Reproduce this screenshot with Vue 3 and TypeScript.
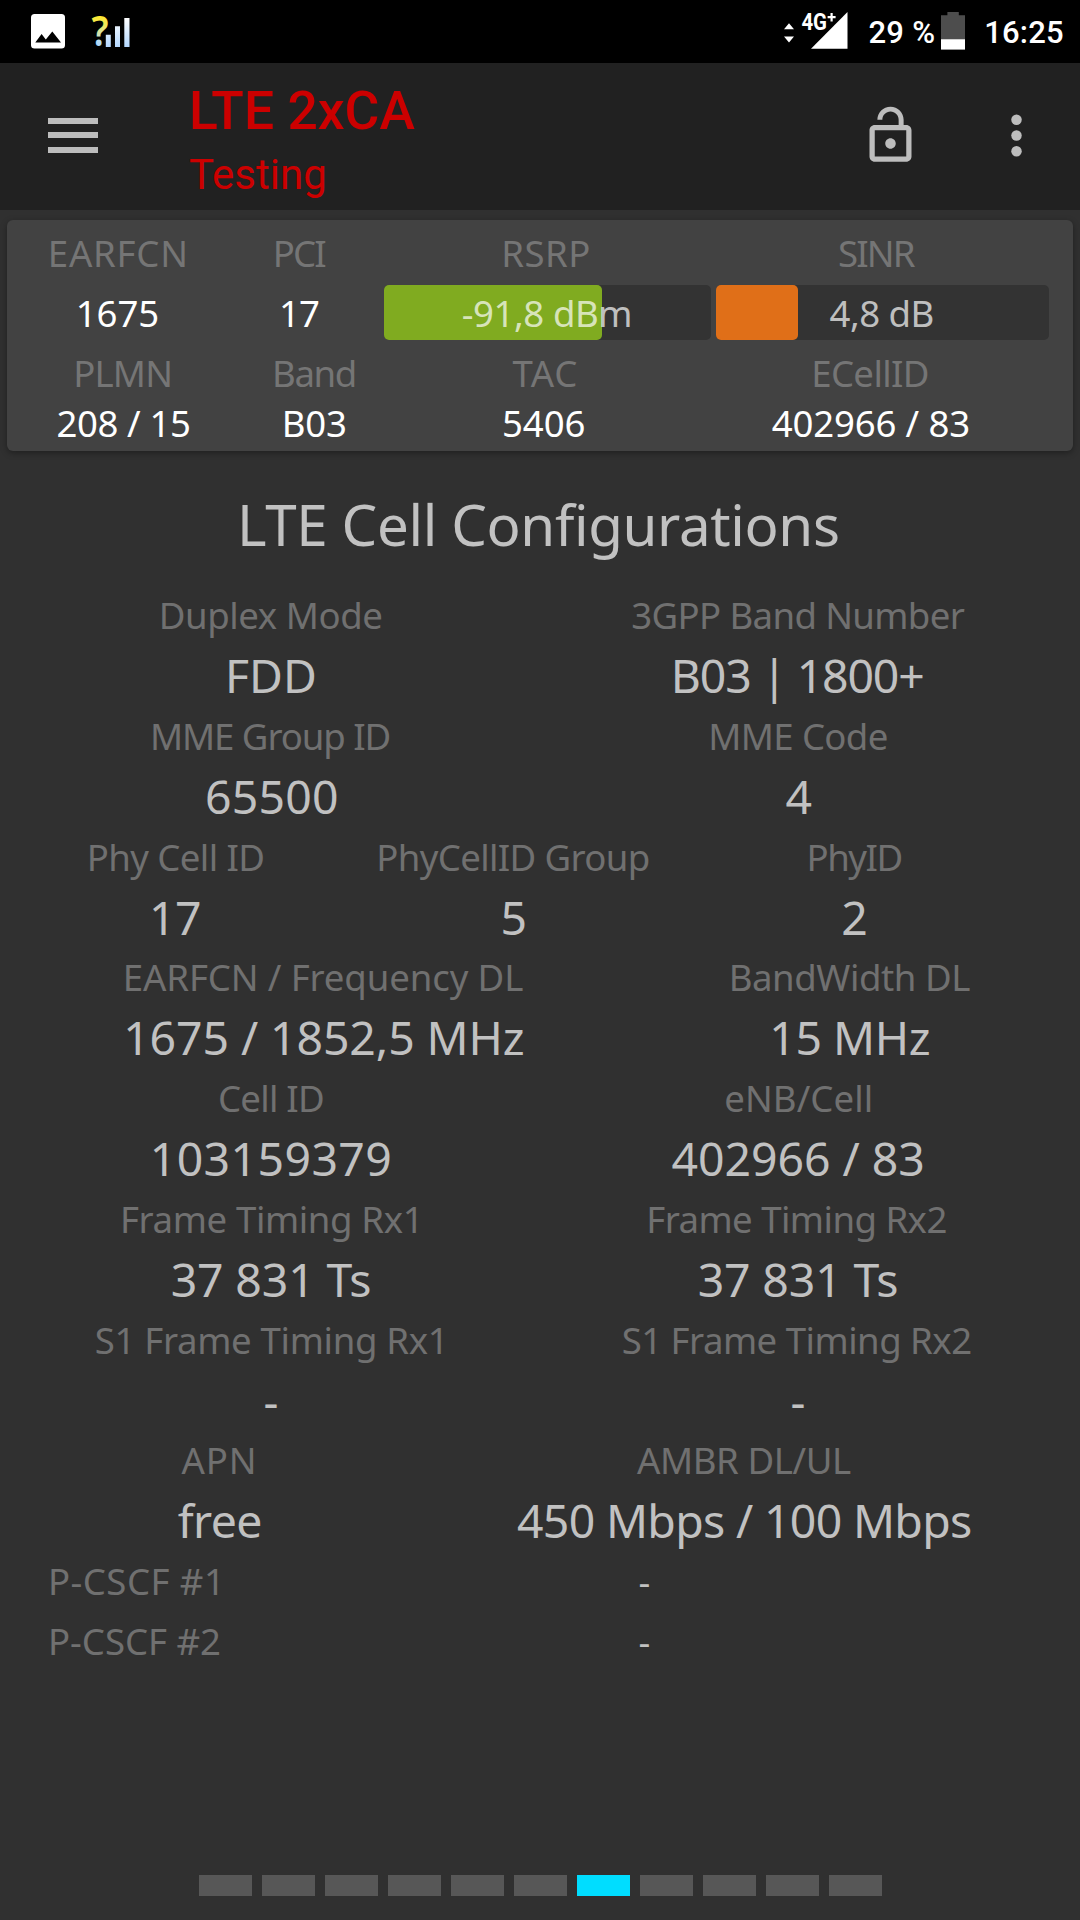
<script setup lang="ts">
interface Cell {
  text: string
  width: number
  shift: number
}
interface Group {
  layout: string
  labels: Cell[]
  values: Cell[]
}

const c = (text: string, width: number, shift = 0): Cell => ({ text, width, shift })

const canvas = document.createElement('canvas').getContext('2d')!

// Tracks a text so that its visible glyphs span the given width, and trims its side bearings.
const vFit = {
  mounted(el: HTMLElement, binding: { value: number | Cell }) {
    const fit = typeof binding.value === 'number' ? c('', binding.value) : binding.value
    const text = el.textContent ?? ''
    const style = getComputedStyle(el)
    canvas.font = `${style.fontWeight} ${style.fontSize} ${style.fontFamily}`
    const m = canvas.measureText(text)
    const ink = m.actualBoundingBoxLeft + m.actualBoundingBoxRight
    const spacing = text.length > 1 ? (fit.width - ink) / (text.length - 1) : 0
    el.style.letterSpacing = `${spacing}px`
    el.style.marginLeft = `${m.actualBoundingBoxLeft + fit.shift}px`
    el.style.marginRight = `${m.actualBoundingBoxRight - m.width - spacing - fit.shift}px`
  },
}

const summaryTop = [c('EARFCN', 134.3), c('PCI', 49.3), c('RSRP', 85), c('SINR', 76.8)]
const summaryLabels = [c('PLMN', 94), c('Band', 79.6), c('TAC', 63.8), c('ECellID', 113.6)]
const summaryValues = [c('208 / 15', 131.5), c('B03', 60.2), c('5406', 80.6), c('402966 / 83', 196.3, -1)]

const groups: Group[] = [
  {
    layout: 'half',
    labels: [c('Duplex Mode', 219.4, -0.5), c('3GPP Band Number', 332.3)],
    values: [c('FDD', 86), c('B03 | 1800+', 248.3, 0.5)],
  },
  {
    layout: 'half',
    labels: [c('MME Group ID', 236.6, -0.8), c('MME Code', 175.3, 0.5)],
    values: [c('65500', 130.1), c('4', 23)],
  },
  {
    layout: 'third',
    labels: [c('Phy Cell ID', 173.5), c('PhyCellID Group', 269.3), c('PhyID', 91.9)],
    values: [c('17', 47), c('5', 21.3, -0.6), c('2', 21, -0.8)],
  },
  {
    layout: 'frequency',
    labels: [c('EARFCN / Frequency DL', 397.3), c('BandWidth DL', 238.6)],
    values: [c('1675 / 1852,5 MHz', 395.7, 0.5), c('15 MHz', 155.3)],
  },
  {
    layout: 'half',
    labels: [c('Cell ID', 103, -0.5), c('eNB/Cell', 144.3)],
    values: [c('103159379', 236.6), c('402966 / 83', 250.7, -1.6)],
  },
  {
    layout: 'half',
    labels: [c('Frame Timing Rx1', 292.7, -2.7), c('Frame Timing Rx2', 297.2, -0.7)],
    values: [c('37 831 Ts', 197.7, -0.5), c('37 831 Ts', 197.7)],
  },
  {
    layout: 'half',
    labels: [c('S1 Frame Timing Rx1', 345, -3.7), c('S1 Frame Timing Rx2', 348.5, -1.6)],
    values: [c('-', 12, -1), c('-', 12, -0.5)],
  },
  {
    layout: 'apn',
    labels: [c('APN', 72.3, -0.9), c('AMBR DL/UL', 213.9)],
    values: [c('free', 82.6, 0.5), c('450 Mbps / 100 Mbps', 454.2)],
  },
]

const servers = [c('P-CSCF #1', 165.9), c('P-CSCF #2', 169)]
const pageCount = 11
const activePage = 7
</script>

<template>
  <div class="screen">
    <header class="status">
      <svg class="picture" width="34" height="35" viewBox="0 0 34 35">
        <rect width="34" height="34.5" rx="3.5" fill="#fff" />
        <path d="M4.3 28.4 10.6 20l4.2 5.6L21.3 17.6 30 28.4z" fill="#000" />
      </svg>
      <svg class="unknown" width="40" height="63" viewBox="0 -13 40 63">
        <defs>
          <linearGradient id="ask" gradientUnits="userSpaceOnUse" x1="0" y1="2" x2="0" y2="34">
            <stop offset="0" stop-color="#ffe82a" />
            <stop offset="0.35" stop-color="#f0e860" />
            <stop offset="0.8" stop-color="#b8dcf4" />
            <stop offset="1" stop-color="#a8d4ff" />
          </linearGradient>
          <linearGradient id="bar" gradientUnits="userSpaceOnUse" x1="0" y1="5" x2="0" y2="34">
            <stop offset="0" stop-color="#fff" />
            <stop offset="1" stop-color="#b4d8ff" />
          </linearGradient>
        </defs>
        <text class="ask" x="0.4" y="33.4" textLength="17" lengthAdjust="spacingAndGlyphs" fill="url(#ask)">?</text>
        <path d="M14.8 21.7h5V34h-5zM24 13.3h5V34h-5zM33.3 5h5.2v29h-5.2z" fill="url(#bar)" />
      </svg>
      <span class="grow"></span>
      <svg class="network" width="64" height="63" viewBox="0 -12 64 63">
        <path d="M0 17.2 5 11.3l5 5.9zM0 24.6h10l-5 5.8z" fill="#fff" />
        <path d="M27 36.8 63.5 0v36.8z" fill="#fff" />
        <text class="net-type" x="17.4" y="18" textLength="25.6" lengthAdjust="spacingAndGlyphs">4G</text>
        <path d="M43.6 5.2h8M47.6 1v8.4" stroke="#fff" stroke-width="2.2" />
      </svg>
      <span class="percent"><span v-fit="64.7">29 %</span></span>
      <svg class="battery" width="24" height="38" viewBox="0 0 24 38">
        <path d="M0 3.2h6.4V0h11.4v3.2H24v24H0z" fill="#4d4d4d" />
        <path d="M0 27.2h24v10.4H0z" fill="#fff" />
      </svg>
      <span class="clock"><span v-fit="76.8">16:25</span></span>
    </header>

    <nav class="toolbar">
      <div class="burger"><i></i><i></i><i></i></div>
      <div class="titles">
        <div class="title"><span v-fit="223.5">LTE 2xCA</span></div>
        <div class="subtitle"><span v-fit="134.2">Testing</span></div>
      </div>
      <svg class="lock" width="63" height="63" viewBox="0 0 24 24" fill="#bdbdbd">
        <path d="M12 17c1.1 0 2-.9 2-2s-.9-2-2-2-2 .9-2 2 .9 2 2 2zm6-9h-1V6c0-2.76-2.24-5-5-5S7 3.24 7 6h1.9c0-1.71 1.39-3.1 3.1-3.1 1.71 0 3.1 1.39 3.1 3.1v2H6c-1.1 0-2 .9-2 2v10c0 1.1.9 2 2 2h12c1.1 0 2-.9 2-2V10c0-1.1-.9-2-2-2zm0 12H6V10h12v10z" />
      </svg>
      <svg class="more" width="63" height="63" viewBox="0 0 24 24" fill="#bdbdbd">
        <circle cx="12" cy="6" r="2" />
        <circle cx="12" cy="12" r="2" />
        <circle cx="12" cy="18" r="2" />
      </svg>
    </nav>

    <section class="card">
      <div class="row top label">
        <div v-for="cell in summaryTop" :key="cell.text"><span v-fit="cell">{{ cell.text }}</span></div>
      </div>
      <div class="row meters strong">
        <div><span v-fit="78.5">1675</span></div>
        <div class="pci"><span v-fit="37.2">17</span></div>
        <div class="meter rsrp"><i></i><span v-fit="167.7">-91,8 dBm</span></div>
        <div class="meter sinr"><i></i><span v-fit="103">4,8 dB</span></div>
      </div>
      <div class="row lower label">
        <div v-for="cell in summaryLabels" :key="cell.text"><span v-fit="cell">{{ cell.text }}</span></div>
      </div>
      <div class="row lower strong last">
        <div v-for="cell in summaryValues" :key="cell.text"><span v-fit="cell">{{ cell.text }}</span></div>
      </div>
    </section>

    <main>
      <h1><span v-fit="595.8">LTE Cell Configurations</span></h1>
      <div v-for="(group, i) in groups" :key="i" class="group" :class="group.layout">
        <div v-for="cell in group.labels" :key="cell.text" class="label"><span v-fit="cell">{{ cell.text }}</span></div>
        <div v-for="(cell, j) in group.values" :key="j" class="value"><span v-fit="cell">{{ cell.text }}</span></div>
      </div>
      <div v-for="server in servers" :key="server.text" class="server">
        <div class="label"><span v-fit="server">{{ server.text }}</span></div>
        <div class="dash"><span v-fit="9.3">-</span></div>
      </div>
    </main>

    <footer class="pager">
      <i v-for="n in pageCount" :key="n" :class="{ active: n === activePage }"></i>
    </footer>
  </div>
</template>

<style>
body {
  margin: 0;
  background: #303030;
}
</style>

<style scoped>
.screen {
  display: flex;
  flex-direction: column;
  width: 1080px;
  height: 1920px;
  overflow: hidden;
  background: #303030;
  font-family: 'Noto Sans', 'Open Sans', sans-serif;
  white-space: pre;
}
.screen span {
  display: inline-block;
}
.status {
  display: flex;
  flex: none;
  height: 63px;
  background: #000;
  color: #fff;
  font: 500 31px/63px Roboto, sans-serif;
}
.status .grow {
  flex: 1;
}
.picture {
  margin: 14px 0 0 31px;
}
.unknown {
  margin-left: 26px;
}
.ask {
  font: 600 42px 'Noto Sans', sans-serif;
}
.network {
  margin-right: 21px;
}
.net-type {
  font: 700 24px Roboto, sans-serif;
  fill: #fff;
}
.percent {
  padding-top: 1px;
}
.battery {
  margin: 12px 21px 0 7px;
}
.clock {
  padding-top: 1px;
  margin-right: 17px;
}
.toolbar {
  display: flex;
  flex: none;
  height: 147px;
  background: #212121;
  color: #cc0000;
  font-family: Roboto, sans-serif;
}
.burger {
  display: flex;
  flex-direction: column;
  gap: 8px;
  width: 50px;
  margin: 55px 92px 0 48px;
}
.burger i {
  height: 6px;
  margin-bottom: 0.4px;
  background: #bdbdbd;
}
.titles {
  flex: 1;
}
.title {
  height: 60px;
  margin: 18px 0 0 2px;
  font-size: 53.4px;
  font-weight: 500;
  line-height: 60px;
}
.subtitle {
  height: 60px;
  margin-top: 4px;
  font-size: 42px;
  line-height: 60px;
}
.lock {
  margin: 41px 63px 0 0;
}
.more {
  margin: 41px 32px 0 0;
}
.card {
  flex: none;
  height: 231px;
  margin: 10px 7px 0;
  border-radius: 6px;
  background: #424242;
  box-shadow: 0 2px 6px rgba(0, 0, 0, 0.35);
}
.row {
  display: grid;
  height: 65px;
  line-height: 67px;
  text-align: center;
}
.label {
  color: #707070;
  font-size: 36.6px;
  font-weight: 400;
}
.card .label {
  color: #757575;
}
.strong {
  color: #fff;
  font-size: 36.6px;
}
.top {
  grid-template-columns: 222px 143px 349.4px 311.8px;
}
.meters {
  grid-template-columns: 222px 155px 327px 338px;
  height: 55px;
  line-height: 57px;
}
.pci {
  padding-right: 12px;
}
.meter {
  display: grid;
  height: 55px;
  border-radius: 5px;
  background: #333;
  color: rgba(255, 255, 255, 0.7);
}
.meter > * {
  grid-area: 1 / 1;
}
.meter span {
  justify-self: center;
}
.meter i {
  height: 55px;
  border-radius: 5px;
}
.rsrp {
  padding-right: 2px;
}
.rsrp i {
  width: 217.5px;
  background: #80ab20;
}
.sinr {
  margin-left: 5px;
  padding-right: 3px;
}
.sinr i {
  width: 81.6px;
  background: #e06f18;
}
.lower {
  grid-template-columns: 232.4px 151px 307.8px 345.6px;
}
.last {
  height: 36px;
  line-height: 36px;
}
main {
  flex: 1;
  padding-top: 12.7px;
}
h1 {
  height: 121.4px;
  margin: 0;
  color: #c1c1c1;
  font-size: 56.5px;
  font-weight: 400;
  line-height: 122.4px;
  text-align: center;
}
.group {
  display: grid;
  grid-template-rows: 60px 60.75px;
  line-height: 60px;
  text-align: center;
}
.half {
  grid-template-columns: 544px 509px;
}
.third {
  grid-template-columns: 353px 322px 361px;
}
.frequency {
  grid-template-columns: 649px 404px;
}
.apn {
  grid-template-columns: 437px 614px;
}
.value {
  color: #c1c1c1;
  font-size: 46.4px;
  line-height: 60.75px;
}
.server {
  display: grid;
  grid-template-columns: 206px 775px;
  height: 60px;
  padding-left: 51px;
  line-height: 60px;
}
.dash {
  color: #c1c1c1;
  font-size: 36.6px;
  text-align: center;
}
.pager {
  display: flex;
  justify-content: center;
  gap: 10px;
  padding-bottom: 24px;
}
.pager i {
  width: 53px;
  height: 21px;
  background: #575757;
}
.pager .active {
  background: #00ddff;
}
</style>
